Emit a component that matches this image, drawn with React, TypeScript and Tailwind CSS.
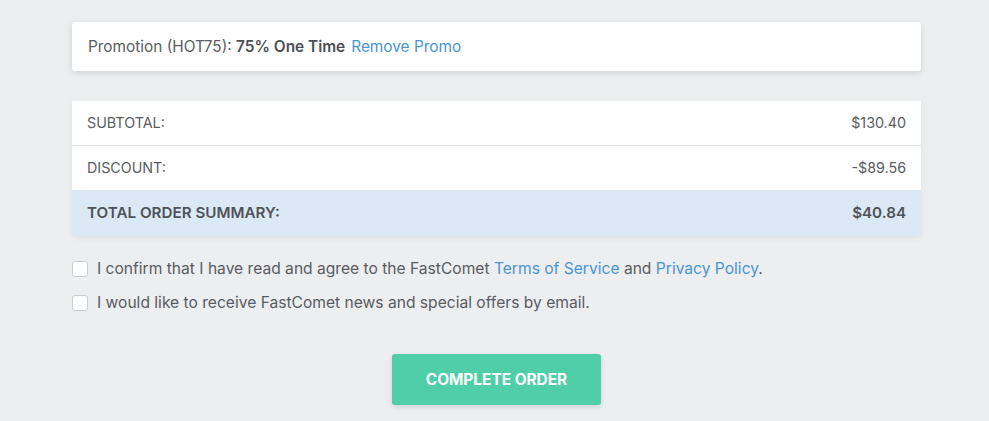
import React from 'react';

const rows = [
  { label: 'SUBTOTAL:', value: '$130.40' },
  { label: 'DISCOUNT:', value: '-$89.56' },
];

const Checkbox: React.FC = () => (
  <span className="w-4 h-4 shrink-0 rounded-[3px] border border-[#c9ccd1] bg-white" />
);

export default function App() {
  return (
    <div className="min-h-[421px] bg-[#edeef0] pt-[22px] text-[#595c61]" style={{ fontFamily: 'Inter, "Noto Sans", sans-serif' }}>
      <div className="mx-auto w-[849px] translate-x-[2px]">
        {/* Promo */}
        <div className="bg-white rounded-[3px] shadow-[0_2px_6px_rgba(0,0,0,0.12)] h-[49px] flex items-center px-4 text-[15.4px]">
          <span>Promotion (HOT75):&nbsp;</span>
          <span className="font-semibold text-[#4c4f54]">75% One Time</span>
          <a className="ml-[6px] text-[#4a95d3]">Remove Promo</a>
        </div>

        {/* Summary table */}
        <div className="mt-[30px] shadow-[0_2px_6px_rgba(0,0,0,0.06)]">
          {rows.map((r) => (
            <div key={r.label} className="bg-white h-[45px] flex items-center justify-between px-[15px] border-b border-[#e1e3e6] text-[14.3px]">
              <span>{r.label}</span>
              <span>{r.value}</span>
            </div>
          ))}
          <div className="bg-[#dbe9f6] h-[45px] flex items-center justify-between px-[15px] text-[15.2px] font-semibold text-[#4f5358]">
            <span>TOTAL ORDER SUMMARY:</span>
            <span>$40.84</span>
          </div>
        </div>

        {/* Agreements */}
        <div className="mt-[21px] flex flex-col gap-[11px] text-[15.6px]">
          <label className="flex items-center gap-[9px]">
            <Checkbox />
            <span>
              I confirm that I have read and agree to the FastComet{' '}
              <a className="text-[#4a95d3]">Terms of Service</a> and{' '}
              <a className="text-[#4a95d3]">Privacy Policy</a>.
            </span>
          </label>
          <label className="flex items-center gap-[9px]">
            <Checkbox />
            <span>I would like to receive FastComet news and special offers by email.</span>
          </label>
        </div>

        <div className="mt-[39px] flex justify-center">
          <button className="w-[209px] h-[51px] rounded-[3px] bg-[#50cea8] text-white font-bold text-[15.4px] shadow-[0_2px_5px_rgba(0,0,0,0.12)]">
            COMPLETE ORDER
          </button>
        </div>
      </div>
    </div>
  );
}
